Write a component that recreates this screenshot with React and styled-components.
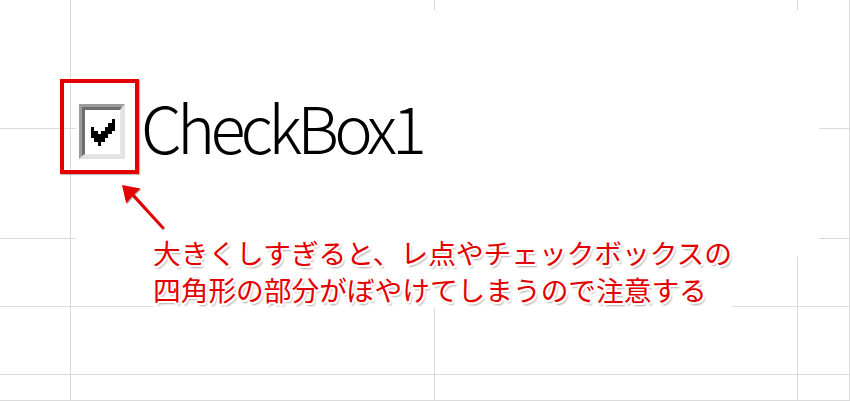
import React from "react";
import styled, { createGlobalStyle } from "styled-components";

const Global = createGlobalStyle`
  html, body { margin: 0; padding: 0; background: #ffffff; }
  body { width: 850px; height: 401px; overflow: hidden; }
`;

const Sheet = styled.div`
  position: relative;
  width: 850px;
  height: 401px;
  overflow: hidden;
  background: #ffffff;
`;

const Grid = styled.div`
  display: grid;
  grid-template-columns: 71px 364px 363px 1fr;
  grid-template-rows: 129px 110px 68px 68px 1fr;
  width: 100%;
  height: 100%;
`;

const Cell = styled.div`
  box-sizing: border-box;
  border-right: 1px solid #dadada;
  border-bottom: 1px solid #dadada;
`;

const FormControl = styled.div`
  position: absolute;
  left: 76px;
  top: 10px;
  width: 743px;
  height: 247px;
  background: #ffffff;
  box-sizing: border-box;
  display: flex;
  align-items: center;
  gap: 16px;
  padding: 0 0 4px 3px;
`;

const BoxOuter = styled.div`
  box-sizing: border-box;
  width: 46px;
  height: 55px;
  border-style: solid;
  border-width: 3px;
  border-color: #9c9c9c #e2e2e2 #e2e2e2 #9c9c9c;
  display: flex;
`;

const BoxInner = styled.div`
  flex: 1;
  box-sizing: border-box;
  border-style: solid;
  border-width: 3px 2px 2px 3px;
  border-color: #6f6f6f #e6e6e6 #e6e6e6 #6f6f6f;
  background: #ffffff;
  display: flex;
  align-items: center;
  justify-content: center;
`;

const Label = styled.span`
  font-family: "Noto Sans CJK JP", "Noto Sans", sans-serif;
  font-weight: 300;
  font-size: 65px;
  letter-spacing: -4.8px;
  line-height: 1;
  color: #000000;
  margin-bottom: 10px;
  white-space: nowrap;
`;

const Highlight = styled.div`
  position: absolute;
  left: 60px;
  top: 79px;
  width: 79px;
  height: 95px;
  box-sizing: border-box;
  border: 4px solid #e40000;
  box-shadow: 1px 1px 1px rgba(0, 0, 0, 0.25);
`;

const ArrowSvg = styled.svg`
  position: absolute;
  left: 110px;
  top: 175px;
  overflow: visible;
  filter: drop-shadow(1px 1px 0.6px rgba(0, 0, 0, 0.3));
`;

const Callout = styled.div`
  position: absolute;
  left: 153px;
  top: 234px;
  background: #ffffff;
  font-family: "Noto Sans CJK JP", "Noto Sans", sans-serif;
  font-size: 27.7px;
  line-height: 37px;
  color: #e40000;
  white-space: nowrap;
  text-shadow:
    -2px 0 0 #fff, 2px 0 0 #fff, 0 -2px 0 #fff, 0 2px 0 #fff,
    -1.5px -1.5px 0 #fff, 1.5px 1.5px 0 #fff, -1.5px 1.5px 0 #fff, 1.5px -1.5px 0 #fff,
    2px 3px 2px rgba(0, 0, 0, 0.35);
`;

const CheckMark = () => (
  <svg width="24" height="27" viewBox="0 0 7 7" preserveAspectRatio="none" shapeRendering="crispEdges">
    <polygon
      fill="#000"
      points="6,0 7,0 7,3 6,3 6,4 5,4 5,5 4,5 4,6 3,6 3,7 2,7 2,6 1,6 1,5 0,5 0,2 1,2 1,3 2,3 2,4 3,4 3,3 4,3 4,2 5,2 5,1 6,1"
    />
  </svg>
);

const Arrow = () => {
  // coordinates relative to svg origin (110,175); tip at page (122,185), tail at (163,229)
  const pts = [
    [12, 10],
    [30.5, 13.5],
    [24.4, 19.2],
    [54.5, 52.6],
    [52.5, 54.4],
    [22.1, 21.4],
    [16.2, 28.5],
  ]
    .map((p) => p.join(","))
    .join(" ");
  return (
    <ArrowSvg width="60" height="60" viewBox="0 0 60 60">
      <polygon points={pts} fill="#e40000" />
    </ArrowSvg>
  );
};

export default function App() {
  const cells = Array.from({ length: 20 }, (_, i) => <Cell key={i} />);
  return (
    <Sheet>
      <Global />
      <Grid>{cells}</Grid>
      <FormControl>
        <BoxOuter>
          <BoxInner>
            <CheckMark />
          </BoxInner>
        </BoxOuter>
        <Label>CheckBox1</Label>
      </FormControl>
      <Highlight />
      <Arrow />
      <Callout>
        大きくしすぎると、レ点やチェックボックスの
        <br />
        四角形の部分がぼやけてしまうので注意する
      </Callout>
    </Sheet>
  );
}
